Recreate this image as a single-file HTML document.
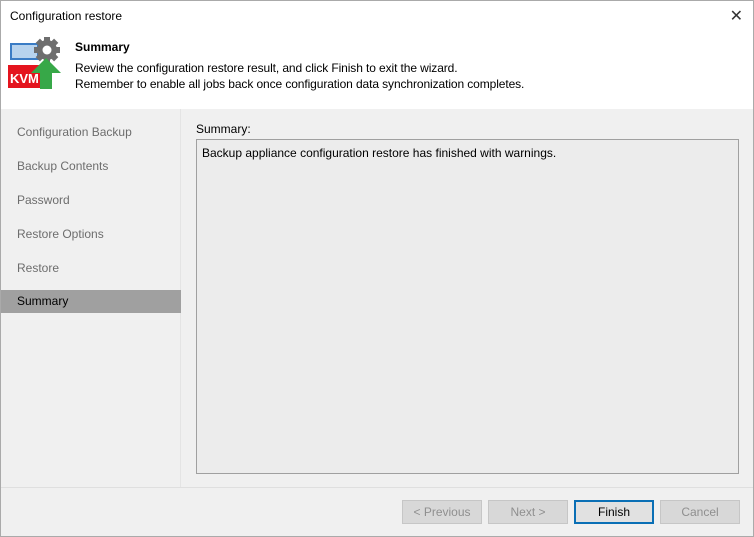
<!DOCTYPE html>
<html><head><style>
*{box-sizing:border-box;margin:0;padding:0}
body{width:754px;height:537px;font-family:"Segoe UI","Liberation Sans",sans-serif;font-size:12px;color:#000;background:#f0f0f0;position:relative;overflow:hidden}
.win{position:absolute;left:0;top:0;width:754px;height:537px;border:1px solid #aaa;background:#f0f0f0}
.title{position:absolute;left:0;top:0;width:752px;height:30px;background:#fff;}
.title span{position:absolute;left:9px;top:8px;font-size:12px}
.close{position:absolute;right:10px;top:5px;font-size:16px;color:#333}
.head{position:absolute;left:0;top:30px;width:752px;height:78px;background:#fff}
.head b{position:absolute;left:74px;top:9px;font-size:12px}
.head p{position:absolute;left:74px;top:29px;line-height:16px;font-size:12px;letter-spacing:-0.1px}
.left{position:absolute;left:0;top:108px;width:180px;height:378px;background:#f0f0f0;border-right:1px solid #e4e4e4}
.item{position:absolute;left:0;width:180px;height:23px;padding-left:16px;line-height:23px;color:#6d6d6d}
.sel{background:#a0a0a0;color:#000}
.lbl{position:absolute;left:195px;top:121px}
.box{position:absolute;left:195px;top:138px;width:543px;height:335px;border:1px solid #a0a0a0;background:#ececec;padding:6px 5px}
.sep{position:absolute;left:0;top:486px;width:752px;height:1px;background:#dfdfdf}
.btn{position:absolute;top:499px;width:80px;height:24px;border:1px solid #c6c6c6;background:#d8d8d8;color:#8f8f8f;text-align:center;line-height:22px}
.fin{border:2px solid #0a6fb5;background:#e1e1e1;color:#000;line-height:20px}
</style></head><body>
<div class="win">
<div class="title"><span>Configuration restore</span><div class="close">✕</div></div>
<div class="head">
<svg style="position:absolute;left:0;top:0" width="70" height="62" viewBox="0 0 70 62">
<rect x="10" y="13" width="27" height="15" fill="#b7d3ee" stroke="#3a7cc5" stroke-width="2"/>
<rect x="7" y="34" width="34" height="23" fill="#e4141e"/>
<text x="9" y="52" font-family="Liberation Sans" font-weight="bold" font-size="13" fill="#fff">KVM</text>
<g transform="translate(46,19)">
<g fill="#6e6e6e">
<rect x="-3" y="-13" width="6" height="26"/>
<rect x="-3" y="-13" width="6" height="26" transform="rotate(45)"/>
<rect x="-3" y="-13" width="6" height="26" transform="rotate(90)"/>
<rect x="-3" y="-13" width="6" height="26" transform="rotate(135)"/>
<circle r="10"/></g>
<circle r="4.5" fill="#fff"/></g>
<polygon points="45,27 60,42 51,42 51,58 39,58 39,42 30,42" fill="#37a848"/>
</svg>
<b>Summary</b>
<p>Review the configuration restore result, and click Finish to exit the wizard.<br>Remember to enable all jobs back once configuration data synchronization completes.</p>
</div>
<div class="left">
<div class="item" style="top:12px">Configuration Backup</div>
<div class="item" style="top:46px">Backup Contents</div>
<div class="item" style="top:80px">Password</div>
<div class="item" style="top:114px">Restore Options</div>
<div class="item" style="top:148px">Restore</div>
<div class="item sel" style="top:181px">Summary</div>
</div>
<div class="lbl">Summary:</div>
<div class="box">Backup appliance configuration restore has finished with warnings.</div>
<div class="sep"></div>
<div class="btn" style="left:401px">&lt; Previous</div>
<div class="btn" style="left:487px">Next &gt;</div>
<div class="btn fin" style="left:573px">Finish</div>
<div class="btn" style="left:659px">Cancel</div>
</div>
</body></html>
